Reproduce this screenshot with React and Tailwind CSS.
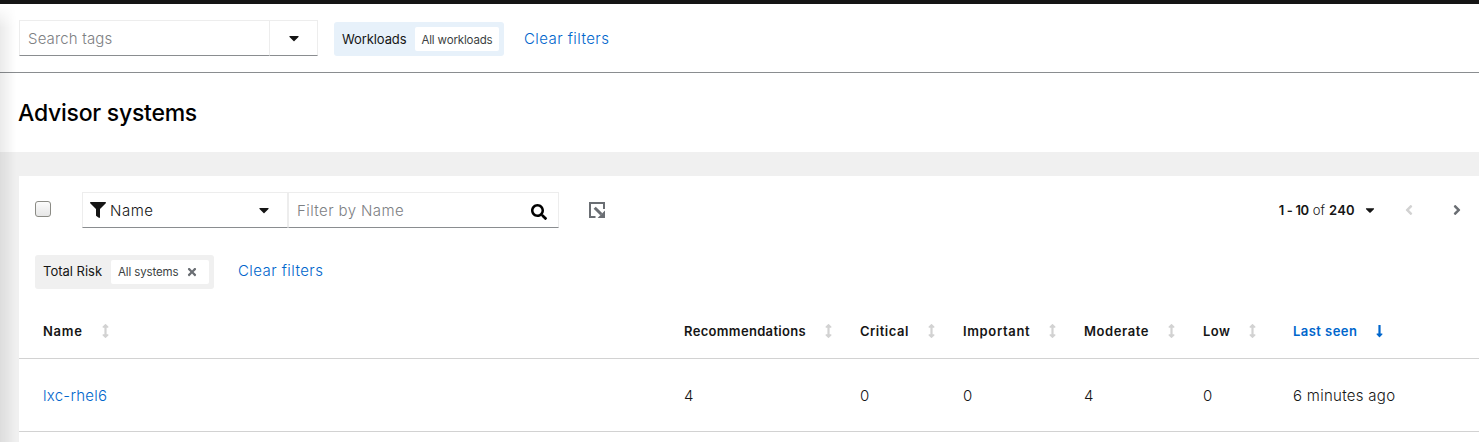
import React from "react";
import {
  FaAngleLeft,
  FaAngleRight,
  FaArrowsAltV,
  FaCaretDown,
  FaFilter,
  FaLongArrowAltDown,
  FaSearch,
  FaTimes,
} from "react-icons/fa";

const columns = [
  { label: "Name", track: "tracking-[0.75px]", value: "lxc-rhel6", link: true },
  { label: "Recommendations", track: "tracking-[0.33px]", value: "4" },
  { label: "Critical", track: "tracking-[0.5px]", value: "0" },
  { label: "Important", track: "tracking-[0.65px]", value: "0" },
  { label: "Moderate", track: "tracking-[0.6px]", value: "4" },
  { label: "Low", track: "tracking-[0.5px]", value: "0" },
  { label: "Last seen", track: "tracking-[0.45px]", value: "6 minutes ago", sorted: true },
];

const rowGrid = "grid grid-cols-[641px_176px_103px_121px_119px_90px_1fr] items-center border-b border-[#d2d2d2] pl-6";

function ClearFilters() {
  return (
    <button className="text-[15px] leading-6 font-light tracking-[0.43px] whitespace-nowrap text-[#0066cc]">Clear filters</button>
  );
}

function ExportIcon() {
  return (
    <svg className="size-4 shrink-0" viewBox="0 0 16 16" fill="none" stroke="#6a6e73">
      <path d="M15 7V1H1v14h5.5" strokeWidth="2" />
      <path d="M5.7 5.7l6.6 6.6" strokeWidth="3" />
      <path d="M16 8.6V16H8.6z" fill="#6a6e73" stroke="none" />
    </svg>
  );
}

function GlobalFilter() {
  return (
    <div className="flex h-[69px] shrink-0 items-start border-b border-[#8a8d90] bg-white pt-4 pl-[19px]">
      <div className="flex h-9 w-[299px]">
        <div className="flex w-[250px] items-center border-t border-b border-l border-t-[#ededed] border-b-[#8a8d90] border-l-[#ededed] pt-0.5 pl-2 text-[15px] font-light tracking-[0.15px] text-[#7d8083]">
          Search tags
        </div>
        <div className="flex flex-1 items-center justify-center border border-[#ededed] border-b-[#8a8d90]">
          <FaCaretDown className="size-4 text-[#151515]" />
        </div>
      </div>
      <div className="mt-0.5 ml-4 flex h-[34px] w-[170px] items-center justify-between rounded-[3px] bg-[#e7f1fa] pr-[5px] pl-2">
        <span className="pt-0.5 text-[13px] tracking-[-0.1px] text-[#151515]">Workloads</span>
        <span className="flex h-6 w-[84px] items-center justify-center rounded-[2px] bg-white pt-[3px] text-[11.5px] tracking-[-0.15px] whitespace-nowrap text-[#3c3f42]">
          All workloads
        </span>
      </div>
      <div className="mt-[7px] ml-5 flex">
        <ClearFilters />
      </div>
    </div>
  );
}

function Toolbar() {
  return (
    <div className="flex h-9 items-center pl-4">
      <div className="mb-0.5 size-4 rounded-[3px] border border-[#8b8b85] bg-linear-to-b from-[#fcfcfc] to-[#e6e6e6]" />
      <div className="ml-[31px] flex h-9 w-[206px] items-center border border-[#ededed] border-b-[#8a8d90] pr-[15px] pl-[7px]">
        <FaFilter className="size-4 text-[#151515]" />
        <span className="ml-1 flex-1 pt-0.5 text-[15px] font-light tracking-[0.5px] text-[#151515]">Name</span>
        <FaCaretDown className="size-4 text-[#151515]" />
      </div>
      <div className="flex h-9 w-[271px] items-center justify-between border border-[#ededed] border-b-[#8a8d90] pr-[11px] pl-2">
        <span className="pt-0.5 text-[15px] font-light tracking-[0.4px] text-[#7d8083]">Filter by Name</span>
        <FaSearch className="mt-[3px] size-4 text-black" />
      </div>
      <div className="ml-[30px] flex">
        <ExportIcon />
      </div>
      <div className="ml-auto flex items-center pr-[14px]">
        <div className="flex items-center gap-1 pt-0.5 text-[13px] whitespace-nowrap text-[#151515]">
          <b className="font-semibold tracking-[-0.35px]">1 - 10</b>
          <span className="font-light">of</span>
          <b className="font-semibold tracking-[0.3px]">240</b>
        </div>
        <FaCaretDown className="ml-2 size-[14px] text-[#151515]" />
        <FaAngleLeft className="ml-6 size-4 text-[#d2d2d2]" />
        <FaAngleRight className="ml-8 size-4 text-[#6a6e73]" />
      </div>
    </div>
  );
}

export default function App() {
  return (
    <div className="relative flex h-[442px] w-[1479px] flex-col overflow-hidden bg-[#f0f0f0] font-['Inter',sans-serif] text-[#151515]">
      <div className="h-1 shrink-0 bg-[#151515]" />
      <GlobalFilter />
      <header className="flex h-[79px] shrink-0 items-center bg-white pt-0.5 pl-[18px]">
        <h1 className="text-[23px] font-medium tracking-[-0.25px] text-black">Advisor systems</h1>
      </header>
      <main className="mt-6 ml-[19px] flex-1 bg-white pt-4">
        <Toolbar />
        <div className="mt-[27px] flex h-[34px] pl-4">
          <div className="flex w-[179px] items-center justify-between rounded-[3px] bg-[#f0f0f0] pr-[5px] pl-2">
            <span className="text-[13px]">Total Risk</span>
            <span className="flex h-6 w-[98px] items-center rounded-[2px] bg-white pl-[7px] text-[11.5px] text-[#3c3f42]">
              <span className="pt-px tracking-[-0.12px] whitespace-nowrap">All systems</span>
              <FaTimes className="ml-[7px] size-3 text-[#6a6e73]" />
            </span>
          </div>
          <div className="ml-6 pt-[3px]">
            <ClearFilters />
          </div>
        </div>
        <div className={`${rowGrid} mt-[15px] h-[55px]`}>
          {columns.map((c) => (
            <div key={c.label} className={`flex items-center gap-[19px] text-[13px] font-semibold whitespace-nowrap ${c.sorted ? "text-[#0066cc]" : ""}`}>
              <span className={`pt-0.5 ${c.track}`}>{c.label}</span>
              {c.sorted ? (
                <FaLongArrowAltDown className="h-[14px] w-[7px]" />
              ) : (
                <FaArrowsAltV className="h-[14px] w-[7px] text-[#d2d2d2]" />
              )}
            </div>
          ))}
        </div>
        <div className={`${rowGrid} h-[73px]`}>
          {columns.map((c) => (
            <div key={c.label} className={`pt-0.5 text-[15px] font-light tracking-[0.28px] ${c.link ? "text-[#0066cc]" : ""}`}>
              {c.value}
            </div>
          ))}
        </div>
      </main>
      <div className="pointer-events-none absolute top-1 bottom-0 left-0 w-4 bg-linear-to-r from-black/8 to-transparent [mask-image:linear-gradient(to_bottom,transparent,black_24px)]" />
    </div>
  );
}
